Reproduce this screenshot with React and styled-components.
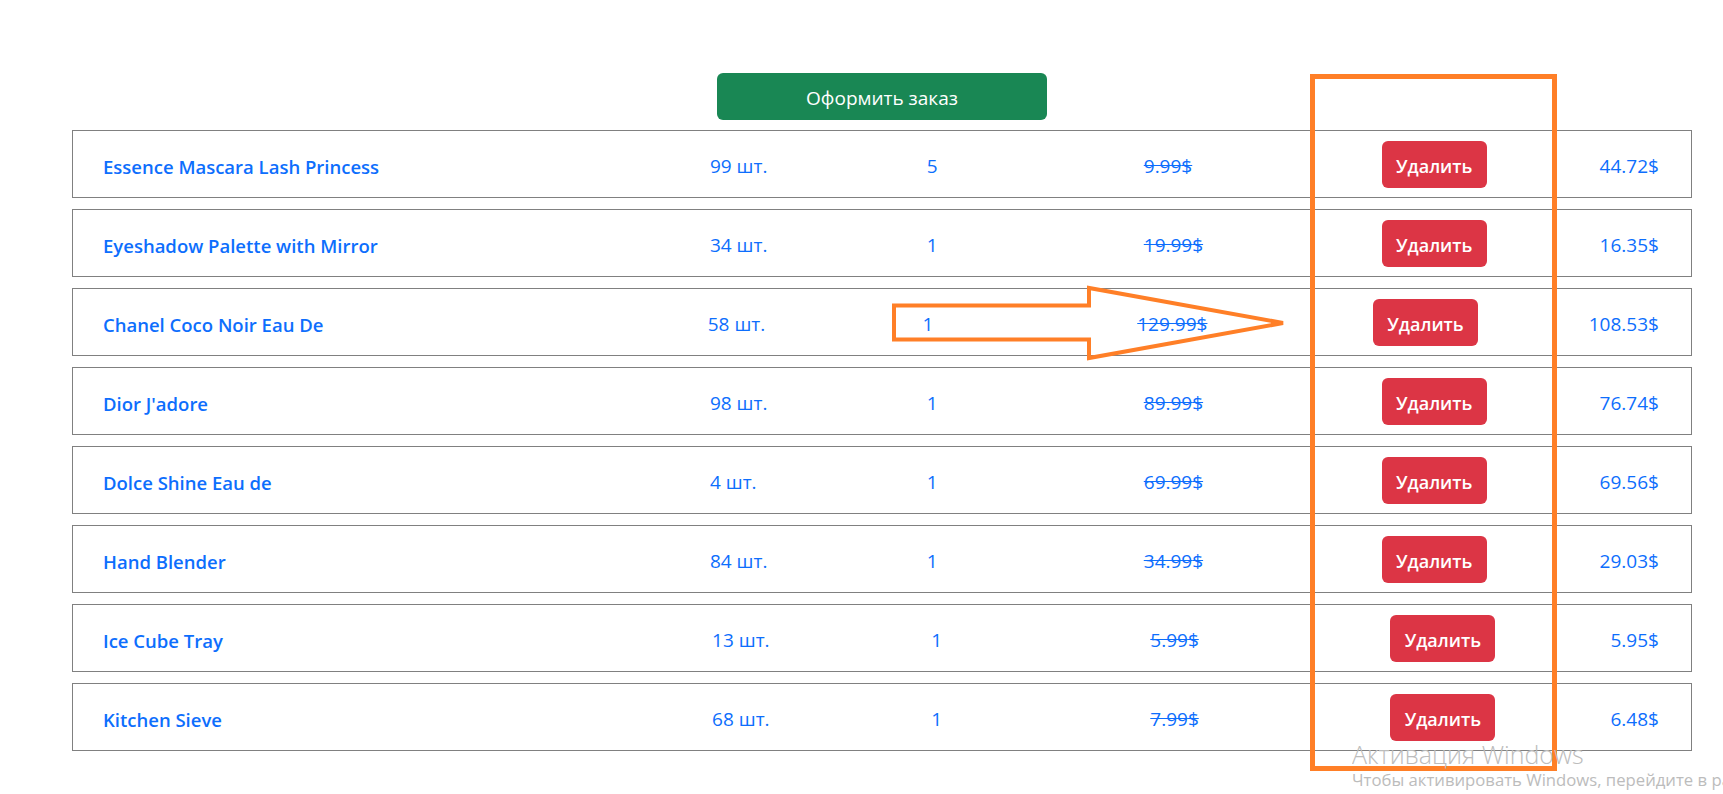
import styled, { createGlobalStyle } from "styled-components"

const GlobalStyle = createGlobalStyle`
  html, body {
    margin: 0;
    padding: 0;
    background: #fff;
    overflow: hidden;
  }
  body {
    font-family: "Open Sans", "Noto Sans", "Liberation Sans", sans-serif;
    color: #0d6efd;
  }
`

const Page = styled.div`
  position: relative;
  width: 1723px;
  height: 794px;
`

const Cart = styled.div`
  width: 1620px;
  margin-left: 72px;
  padding-top: 73px;
  display: flex;
  flex-direction: column;
  gap: 11px;
`

const Toolbar = styled.div`
  display: flex;
  justify-content: center;
  margin-bottom: -1px;
`

const OrderButton = styled.button`
  width: 330px;
  height: 47px;
  padding: 3px 0 0;
  border: none;
  border-radius: 6px;
  background: #198754;
  color: #fff;
  font-family: inherit;
  font-size: 19px;
  cursor: pointer;
`

const Row = styled.div`
  height: 66px;
  border: 1px solid #808080;
  padding: 0 32px 0 30px;
  display: flex;
  align-items: center;
  justify-content: space-between;
  font-size: 19px;
`

const Cell = styled.div`
  width: ${(props) => props.w}px;
  flex: none;
  padding-top: 4px;
  white-space: nowrap;
  font-size: ${(props) => (props.bold ? "18.5px" : "19px")};
  font-weight: ${(props) => (props.bold ? 600 : 400)};
  text-decoration: ${(props) => (props.strike ? "line-through" : "none")};
`

const Total = styled.div`
  padding-top: 4px;
  white-space: nowrap;
  text-align: right;
`

const DeleteButton = styled.button`
  width: 105px;
  height: 47px;
  flex: none;
  padding: 3px 0 0;
  border: none;
  border-radius: 6px;
  background: #dc3545;
  color: #fff;
  font-family: inherit;
  font-size: 18px;
  font-weight: 600;
  cursor: pointer;
`

const Annotations = styled.svg`
  position: absolute;
  top: 0;
  left: 0;
  pointer-events: none;
`

const Watermark = styled.div`
  position: absolute;
  left: 1352px;
  right: 0;
  top: 738px;
  overflow: hidden;
  white-space: nowrap;
  color: #bcbcbc;
  pointer-events: none;
`

const WatermarkTitle = styled.div`
  font-size: 25px;
  line-height: 32px;
  font-weight: 300;
`

const WatermarkText = styled.div`
  font-size: 16.7px;
  line-height: 20px;
`

const items = [
  { name: "Essence Mascara Lash Princess", stock: 99, count: 5, price: "9.99", total: "44.72" },
  { name: "Eyeshadow Palette with Mirror", stock: 34, count: 1, price: "19.99", total: "16.35" },
  { name: "Chanel Coco Noir Eau De", stock: 58, count: 1, price: "129.99", total: "108.53" },
  { name: "Dior J'adore", stock: 98, count: 1, price: "89.99", total: "76.74" },
  { name: "Dolce Shine Eau de", stock: 4, count: 1, price: "69.99", total: "69.56" },
  { name: "Hand Blender", stock: 84, count: 1, price: "34.99", total: "29.03" },
  { name: "Ice Cube Tray", stock: 13, count: 1, price: "5.99", total: "5.95" },
  { name: "Kitchen Sieve", stock: 68, count: 1, price: "7.99", total: "6.48" }
]

const ORANGE = "#ff7f27"

const App = () => {
  return (
    <Page>
      <GlobalStyle />
      <Cart>
        <Toolbar>
          <OrderButton>Оформить заказ</OrderButton>
        </Toolbar>
        {items.map((item) => (
          <Row key={item.name}>
            <Cell w={494} bold>
              {item.name}
            </Cell>
            <Cell w={104}>{item.stock} шт.</Cell>
            <Cell w={104}>{item.count}</Cell>
            <Cell w={125} strike>
              {item.price}$
            </Cell>
            <DeleteButton>Удалить</DeleteButton>
            <Total>{item.total}$</Total>
          </Row>
        ))}
      </Cart>

      {/* hand-drawn markup over the screenshot */}
      <Annotations width='1723' height='794' viewBox='0 0 1723 794'>
        <rect
          x='1312.5'
          y='76.5'
          width='242'
          height='692'
          fill='none'
          stroke={ORANGE}
          strokeWidth='5'
        />
        <polygon
          points='894,305.5 1089,305.5 1089,288 1283,323 1089,358 1089,339.5 894,339.5'
          fill='none'
          stroke={ORANGE}
          strokeWidth='4'
        />
      </Annotations>

      <Watermark>
        <WatermarkTitle>Активация Windows</WatermarkTitle>
        <WatermarkText>
          Чтобы активировать Windows, перейдите в раздел "Параметры".
        </WatermarkText>
      </Watermark>
    </Page>
  )
}

export default App
